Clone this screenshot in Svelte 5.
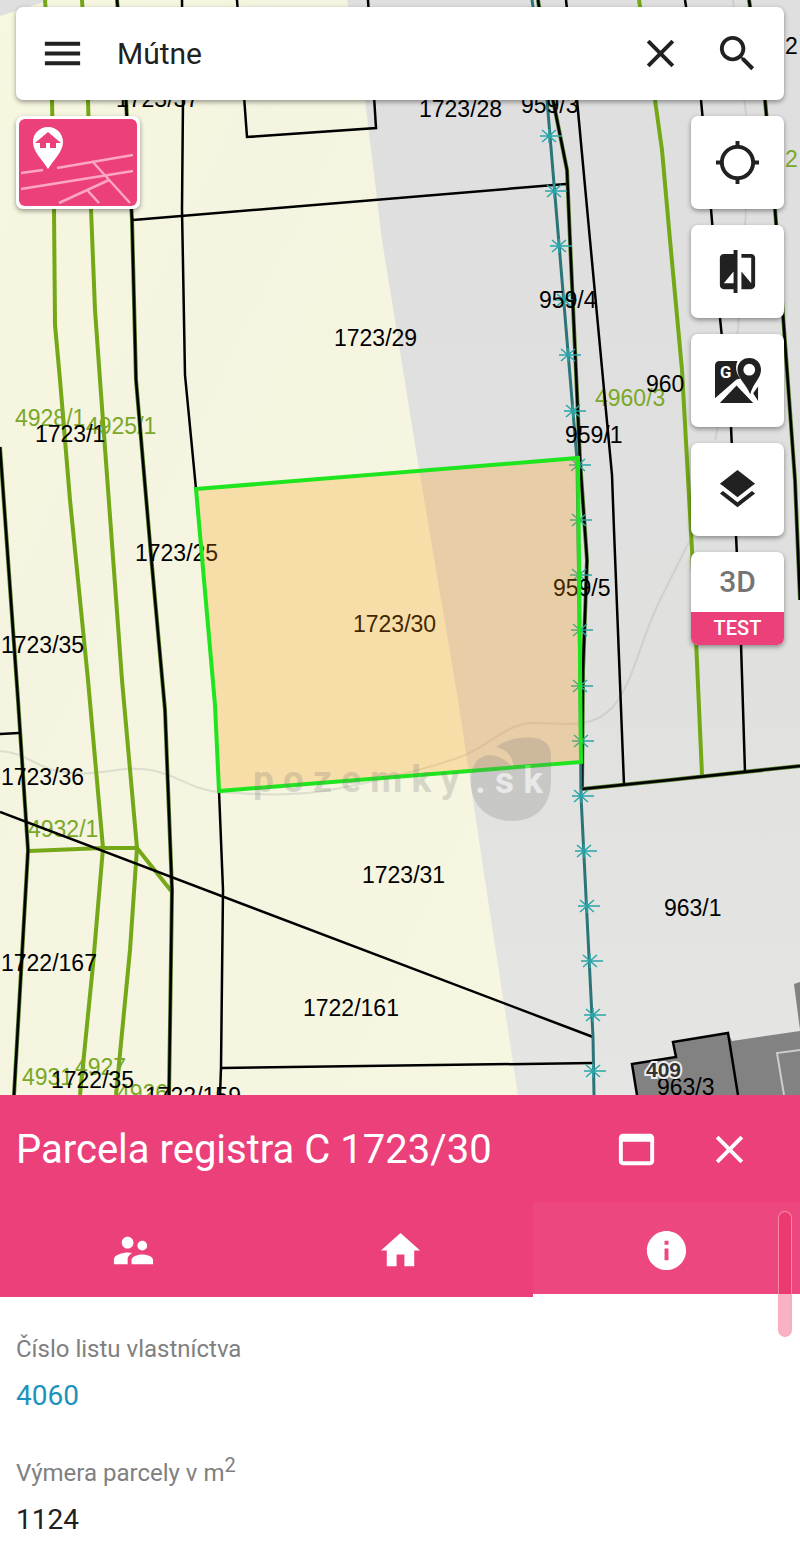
<script lang="ts">
    type Label = { text: string; x: number; y: number };

    const icons = {
        menu: 'M3 18h18v-2H3v2zm0-5h18v-2H3v2zm0-7v2h18V6H3z',
        close: 'M19 6.41L17.59 5 12 10.59 6.41 5 5 6.41 10.59 12 5 17.59 6.41 19 12 13.41 17.59 19 19 17.59 13.41 12z',
        search: 'M15.5 14h-.79l-.28-.27C15.41 12.59 16 11.11 16 9.5 16 5.91 13.09 3 9.5 3S3 5.91 3 9.5 5.91 16 9.5 16c1.61 0 3.09-.59 4.23-1.57l.27.28v.79l5 4.99L20.49 19l-4.99-5zm-6 0C7.01 14 5 11.99 5 9.5S7.01 5 9.5 5 14 7.01 14 9.5 11.99 14 9.5 14z',
        locate: 'M20.94 11c-.46-4.17-3.77-7.48-7.94-7.94V1h-2v2.06C6.83 3.52 3.52 6.83 3.06 11H1v2h2.06c.46 4.17 3.77 7.48 7.94 7.94V23h2v-2.06c4.17-.46 7.48-3.77 7.94-7.94H23v-2h-2.06zM12 19c-3.87 0-7-3.13-7-7s3.13-7 7-7 7 3.13 7 7-3.13 7-7 7z',
        compare: 'M10 3H5c-1.1 0-2 .9-2 2v14c0 1.1.9 2 2 2h5v2h2V1h-2v2zm0 15H5l5-6v6zm9-15h-5v2h5v13l-5-6v9h5c1.1 0 2-.9 2-2V5c0-1.1-.9-2-2-2z',
        layers: 'M11.99 18.54l-7.37-5.73L3 14.07l9 7 9-7-1.63-1.27-7.38 5.74zM12 16l7.36-5.73L21 9l-9-7-9 7 1.63 1.27L12 16z',
        window: 'M19 4H5c-1.11 0-2 .9-2 2v12c0 1.1.89 2 2 2h14c1.1 0 2-.9 2-2V6c0-1.1-.89-2-2-2zm0 14H5V8h14v10z',
        owners: 'M16.5 12c1.38 0 2.49-1.12 2.49-2.5S17.88 7 16.5 7C15.12 7 14 8.12 14 9.5s1.12 2.5 2.5 2.5zM9 11c1.66 0 2.99-1.34 2.99-3S10.66 5 9 5C7.34 5 6 6.34 6 8s1.34 3 3 3zm7.5 3c-1.83 0-5.5.92-5.5 2.75V19h11v-2.25c0-1.83-3.67-2.75-5.5-2.75zM9 13c-2.33 0-7 1.17-7 3.5V19h7v-2.25c0-.85.33-2.34 2.37-3.47C10.5 13.1 9.66 13 9 13z',
        home: 'M10 20v-6h4v6h5v-8h3L12 3 2 12h3v8z',
        info: 'M12 2C6.48 2 2 6.48 2 12s4.48 10 10 10 10-4.48 10-10S17.52 2 12 2zm1 15h-2v-6h2v6zm0-8h-2V7h2v2z'
    };

    // Register E boundaries
    const greenLines = [
        '45,0 52,100 54,209 55,325 60,380 70,500 88,680 103,848 93,965 80,1095',
        '82,0 88,100 91,209 95,310 100,380 122,680 137,848 130,950 116,1095',
        '29,851 103,848 137,848 172,892',
        '639,0 655,100 662,150 670,240 682,370 692,550 702,775'
    ];

    // Register C boundaries
    const blackLines = [
        '182,0 183,100 182,209 185,375 196,489',
        '219,791 223,890 221,1068 220,1095',
        '237,0 247,137 376,128 368,0',
        '133,220 566,184',
        '566,0 577,100 590,240 612,475 614,530 624,785',
        '685,0 701,100 711,209 720,318 731,427 736,535 741,644 745,772',
        '0,734 19,733',
        '0,812 593,1037',
        '221,1068 593,1063'
    ];

    const sharedLines = [
        '117,0 126,100 132,220 136,380 151,555 165,710 172,890 169,1095',
        '0,447 18,700 28,850 14,1095',
        '538,0 553,100 567,170 570,240 575,350 580,460 587,560 583,670 582,789',
        '582,789 670,780 800,766',
        '749,0 765,100 775,209 783,315 795,480 800,600'
    ];

    const fenceMarks = [
        [549, 136], [554, 191], [559, 246], [564, 300], [568, 355], [573, 411],
        [578, 465], [579, 520], [579, 575], [580, 630], [580, 686], [581, 741],
        [581, 796], [584, 851], [587, 906], [590, 961], [593, 1015], [593, 1071]
    ];

    const greenLabels: Label[] = [
        { text: '4928/1', x: 15, y: 426 },
        { text: '4925/1', x: 86, y: 434 },
        { text: '4960/3', x: 595, y: 406 },
        { text: '4932/1', x: 28, y: 837 },
        { text: '4931', x: 22, y: 1085 },
        { text: '4927', x: 75, y: 1075 },
        { text: '4926', x: 117, y: 1101 },
        { text: '2', x: 785, y: 167 }
    ];

    const blackLabels: Label[] = [
        { text: '1723/37', x: 116, y: 107 },
        { text: '1723/28', x: 419, y: 117 },
        { text: '959/3', x: 521, y: 113 },
        { text: '1723/29', x: 334, y: 346 },
        { text: '959/4', x: 539, y: 308 },
        { text: '960', x: 646, y: 392 },
        { text: '1723/1', x: 35, y: 442 },
        { text: '959/1', x: 565, y: 443 },
        { text: '1723/25', x: 135, y: 561 },
        { text: '959/5', x: 553, y: 596 },
        { text: '1723/30', x: 353, y: 632 },
        { text: '1723/35', x: 1, y: 653 },
        { text: '1723/36', x: 1, y: 785 },
        { text: '1723/31', x: 362, y: 883 },
        { text: '963/1', x: 664, y: 916 },
        { text: '1722/167', x: 1, y: 971 },
        { text: '1722/161', x: 303, y: 1016 },
        { text: '1722/35', x: 51, y: 1088 },
        { text: '1722/159', x: 145, y: 1104 },
        { text: '963/3', x: 657, y: 1095 },
        { text: '2', x: 785, y: 54 }
    ];

    const tabs = [
        { id: 'owners', label: 'Vlastníci', icon: icons.owners },
        { id: 'buildings', label: 'Stavby', icon: icons.home },
        { id: 'info', label: 'Informácie', icon: icons.info }
    ];

    let query = $state('Mútne');
    let activeTab = $state('info');
</script>

{#snippet icon(path: string)}
    <svg class="icon" viewBox="0 0 24 24" aria-hidden="true"><path d={path} /></svg>
{/snippet}

<div class="app">
    <main class="map">
        <svg class="map-canvas" viewBox="0 0 800 1095" preserveAspectRatio="xMidYMin slice" aria-hidden="true">
            <defs>
                <linearGradient id="field" x1="0" y1="0" x2="1" y2="1">
                    <stop offset="0" stop-color="#f8f8e0" />
                    <stop offset="0.3" stop-color="#f4f4e0" />
                    <stop offset="1" stop-color="#f6f6e1" />
                </linearGradient>
                <linearGradient id="terrain" x1="0" y1="0" x2="0" y2="1">
                    <stop offset="0" stop-color="#dfdfdf" />
                    <stop offset="0.6" stop-color="#e0e0df" />
                    <stop offset="1" stop-color="#e5e5e3" />
                </linearGradient>
                <g id="fence">
                    <path d="M-7-6 7 6M-7 6 7-6M0-7V7M-9 0H13" />
                </g>
            </defs>

            <rect width="800" height="1095" fill="url(#terrain)" />
            <path d="M0 16 50 0H347L365 100 382 240 420 475 458 700 488 900 518 1095H0Z" fill="url(#field)" />

            <g class="contour">
                <path d="M0 751C30 753 35 770 70 773S120 765 150 770 190 790 220 792 290 797 330 790 430 768 460 757 505 723 535 723 590 730 612 708C635 680 640 640 660 600L690 540" />
                <path d="M733 0 750 150 738 330 715 440" />
            </g>

            <!-- Buildings -->
            <g class="building">
                <path d="M632 1064 676 1057 673 1042 728 1033 732 1041 800 1031V1095H637Z" />
                <path d="M794 984 800 982V1030Z" />
            </g>
            <path class="building-edge" d="M784 1095 777 1053 800 1050" />

            {#each greenLines as points}
                <polyline class="green-line" {points} />
            {/each}
            {#each greenLabels as label}
                <text class="green-label" x={label.x} y={label.y}>{label.text}</text>
            {/each}

            {#each sharedLines as points}
                <polyline class="shared-line" {points} />
                <polyline class="black-line" {points} />
            {/each}
            {#each blackLines as points}
                <polyline class="black-line" {points} />
            {/each}
            <path class="black-line" d="M637 1095 632 1064 676 1057 673 1042 728 1033 738 1095" />

            <polyline class="fence-line" points="532,0 547,100 577,460 580,686 581,796 593,1037 594,1095" />
            {#each fenceMarks as [x, y]}
                <use class="fence-mark" href="#fence" {x} {y} />
            {/each}

            {#each blackLabels as label}
                <text x={label.x} y={label.y}>{label.text}</text>
            {/each}
            <text class="house-number" x="646" y="1077">409</text>

            <!-- Selected parcel -->
            <polygon class="parcel" points="196,489 578,458 581,762 219,791 215,705" />

            <!-- Watermark -->
            <g class="watermark">
                <path d="M471 785C469 760 484 752 496 756 504 758 509 764 514 768 512 752 503 749 496 747 510 737 525 737 535 738 547 740 551 747 551 756V780C551 806 536 821 512 821 488 821 472 806 471 785Z" />
                <text x="253" y="792">p o z e m k y</text>
                <text class="watermark-tld" x="475" y="793">. s k</text>
            </g>
        </svg>

        <form class="search" onsubmit={(e) => e.preventDefault()}>
            <button type="button" aria-label="Menu">{@render icon(icons.menu)}</button>
            <input type="text" aria-label="Hľadať" bind:value={query} />
            <button type="button" aria-label="Vymazať" onclick={() => (query = '')}>{@render icon(icons.close)}</button>
            <button type="submit" aria-label="Hľadať">{@render icon(icons.search)}</button>
        </form>

        <div class="controls">
            <button type="button" class="basemap" aria-label="Podkladová mapa">
                <svg viewBox="0 0 118 87" aria-hidden="true">
                    <g class="streets">
                        <path d="M2 54 24 51M38 49 114 36M2 70 114 52M40 84 90 61M73 42 111 84M69 72 80 84" />
                    </g>
                    <path fill="#fff" d="M29 8C20 8 14 15 14 23 14 33 23 40 29 50 35 40 44 33 44 23 44 15 38 8 29 8Z" />
                    <path fill="#ec407a" d="M29 13 16 24H21V29H27V24H31V29H37V24H42Z" />
                </svg>
            </button>

            <div class="tools">
                <button type="button" class="tool" aria-label="Moja poloha">{@render icon(icons.locate)}</button>
                <button type="button" class="tool" aria-label="Porovnať mapy">{@render icon(icons.compare)}</button>
                <button type="button" class="tool" aria-label="Google mapy">
                    <svg class="icon" viewBox="0 0 48 48" aria-hidden="true">
                        <path d="M1 42V9Q1 4 6 4H24C21 11 23 17 27 22L23 23ZM6 47 23 29 40 47ZM40 37 45 30V45Z" />
                        <path fill-rule="evenodd" d="M36 1C29 1 24 6 24 13 24 22 32 26 37 38 40 26 48 22 48 13 48 6 43 1 36 1ZM36 7A6 6 0 1 1 36 19A6 6 0 1 1 36 7Z" />
                        <text class="google" x="6" y="21">G</text>
                    </svg>
                </button>
                <button type="button" class="tool" aria-label="Vrstvy">{@render icon(icons.layers)}</button>
                <button type="button" class="tool view3d">
                    <span class="view3d-name">3D</span>
                    <span class="view3d-badge">TEST</span>
                </button>
            </div>
        </div>
    </main>

    <section class="panel">
        <header class="panel-header">
            <h1>Parcela registra C 1723/30</h1>
            <button type="button" aria-label="Maximalizovať">{@render icon(icons.window)}</button>
            <button type="button" aria-label="Zavrieť">{@render icon(icons.close)}</button>
        </header>

        <div class="tabs" role="tablist">
            {#each tabs as tab}
                <button
                    type="button"
                    role="tab"
                    class:active={activeTab === tab.id}
                    aria-selected={activeTab === tab.id}
                    aria-label={tab.label}
                    onclick={() => (activeTab = tab.id)}
                >
                    {@render icon(tab.icon)}
                </button>
            {/each}
            <div class="scroll-thumb"></div>
        </div>

        <dl class="details">
            <div>
                <dt>Číslo listu vlastníctva</dt>
                <dd><a href="#list-vlastnictva">4060</a></dd>
            </div>
            <div>
                <dt>Výmera parcely v m<sup>2</sup></dt>
                <dd>1124</dd>
            </div>
        </dl>
    </section>
</div>

<style>
    :global(body) {
        margin: 0;
    }

    .app {
        --pink: #ec407a;
        --ink: #212121;
        display: flex;
        flex-direction: column;
        min-height: 100vh;
        font-family: Roboto, "Liberation Sans", sans-serif;
        color: var(--ink);
        background: #fff;
    }

    button {
        display: flex;
        align-items: center;
        justify-content: center;
        padding: 0;
        border: none;
        background: none;
        color: inherit;
        font-family: inherit;
        cursor: pointer;
    }

    .icon {
        width: 47px;
        height: 47px;
        fill: currentColor;
    }

    /* Map */
    .map {
        position: relative;
        flex: 1;
        box-sizing: border-box;
        padding: 7px 16px 16px;
        overflow: hidden;
    }

    .map-canvas {
        position: absolute;
        inset: 0;
        width: 100%;
        height: 100%;
        font-family: "Liberation Sans", Arial, sans-serif;
        font-size: 23px;
    }

    .map-canvas polyline,
    .black-line {
        fill: none;
    }

    .contour {
        fill: none;
        stroke: #aaa;
        stroke-opacity: 0.3;
        stroke-width: 2;
    }

    .building {
        fill: #828282;
    }

    .building-edge {
        fill: none;
        stroke: #ccc;
        stroke-width: 2;
    }

    .green-line {
        stroke: #74a817;
        stroke-width: 4;
    }

    .green-label {
        fill: #7aa829;
    }

    .shared-line {
        stroke: #4f7a26;
        stroke-width: 4;
    }

    .black-line {
        stroke: #000;
        stroke-width: 2.5;
    }

    .fence-line {
        stroke: #2b7478;
        stroke-width: 3;
    }

    .fence-mark {
        stroke: #2aa5a8;
        stroke-width: 1.5;
    }

    .house-number {
        font-size: 21px;
        font-weight: bold;
        fill: #333;
        stroke: #eee;
        stroke-width: 4;
        paint-order: stroke;
    }

    .parcel {
        fill: #ff9900;
        fill-opacity: 0.25;
        stroke: #1fe51f;
        stroke-width: 4;
    }

    .watermark {
        fill: #777;
        opacity: 0.24;
        font-family: Roboto, sans-serif;
        font-size: 37px;
        font-weight: bold;
    }

    .watermark-tld {
        fill: #fff;
    }

    .search {
        position: relative;
        display: flex;
        height: 93px;
        padding: 0 8px;
        border-radius: 7px;
        background: #fff;
        box-shadow: 0 2px 5px rgba(0, 0, 0, 0.4);
    }

    .search button {
        flex: 0 0 77px;
    }

    .search input {
        flex: 1;
        min-width: 0;
        padding: 0 16px;
        border: none;
        outline: none;
        background: none;
        color: inherit;
        font-family: inherit;
        font-size: 30px;
    }

    .controls {
        position: relative;
        display: flex;
        align-items: flex-start;
        justify-content: space-between;
        margin-top: 16px;
    }

    .basemap,
    .tool {
        box-sizing: border-box;
        height: 93px;
        border-radius: 7px;
        background: #fff;
        box-shadow: 0 2px 5px rgba(0, 0, 0, 0.4);
    }

    .basemap {
        width: 124px;
        padding: 3px;
    }

    .basemap svg {
        width: 100%;
        height: 100%;
        border-radius: 6px;
        background: var(--pink);
    }

    .streets {
        fill: none;
        stroke: #fda5c5;
        stroke-width: 2.5;
    }

    .tools {
        display: flex;
        flex-direction: column;
        gap: 16px;
    }

    .tool {
        width: 93px;
    }

    .google {
        fill: #fff;
        font-size: 17px;
        font-weight: bold;
    }

    .view3d {
        flex-direction: column;
        align-items: stretch;
        overflow: hidden;
    }

    .view3d-name {
        flex: 1;
        color: #757575;
        font-size: 30px;
        font-weight: 500;
        line-height: 60px;
    }

    .view3d-badge {
        background: var(--pink);
        color: #fff;
        font-size: 20px;
        font-weight: 500;
        line-height: 33px;
    }

    /* Panel */
    .panel-header {
        display: flex;
        align-items: center;
        height: 108px;
        padding: 0 24px 0 16px;
        background: var(--pink);
        color: #fff;
    }

    .panel-header h1 {
        flex: 1;
        margin: 0;
        font-size: 40px;
        font-weight: 400;
    }

    .panel-header button {
        width: 93px;
        height: 93px;
    }

    .tabs {
        position: relative;
        display: flex;
        height: 94px;
        background: var(--pink);
        color: #fff;
    }

    .tabs button {
        flex: 1;
        border-top: 3px solid transparent;
        border-bottom: 3px solid transparent;
    }

    .tabs .active {
        border-bottom-color: #fff;
        background: #ec487f;
    }

    .scroll-thumb {
        position: absolute;
        top: 8px;
        right: 8px;
        box-sizing: border-box;
        width: 14px;
        height: 126px;
        border: 1px solid rgba(255, 170, 190, 0.7);
        border-radius: 7px;
        background: rgba(235, 35, 85, 0.35);
    }

    .details {
        display: flex;
        flex-direction: column;
        gap: 45px;
        margin: 0;
        padding: 36px 16px 19px;
        line-height: 32px;
    }

    .details dt {
        margin-bottom: 15px;
        color: #808080;
        font-size: 24px;
    }

    .details dd {
        margin: 0;
        font-size: 28px;
    }

    .details a {
        color: #1c93bd;
        text-decoration: none;
    }

    .details sup {
        font-size: 20px;
        line-height: 0;
    }
</style>
